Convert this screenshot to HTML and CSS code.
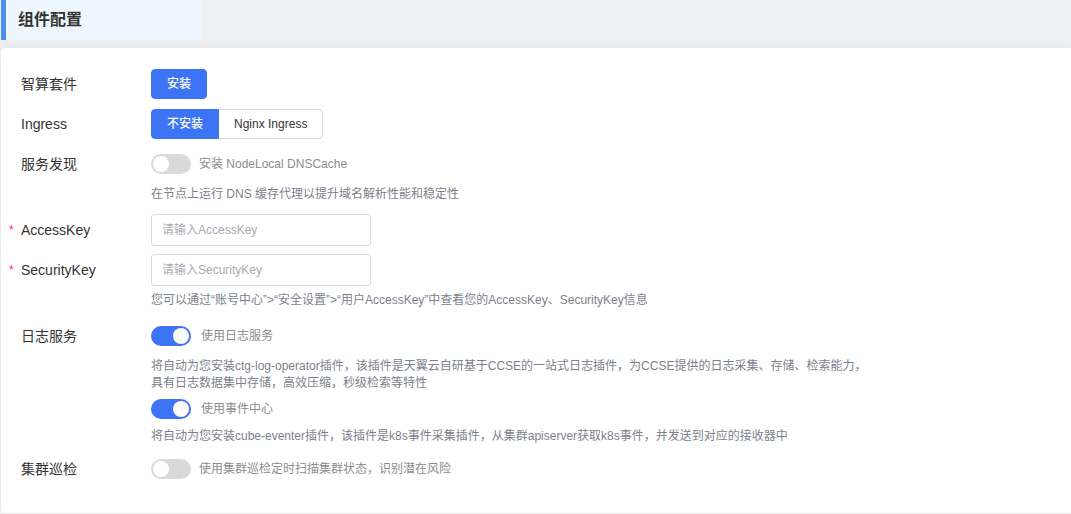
FILE: index.html
```html
<!DOCTYPE html>
<html lang="zh-CN">
<head>
<meta charset="utf-8">
<title>组件配置</title>
<link rel="stylesheet" href="styles.css">
</head>
<body>
<header class="section-bar"><h1 class="section-title">组件配置</h1></header>
<form class="card">
  <div class="row">
    <span class="label" id="suite">智算套件</span>
    <div class="content">
      <div class="line segments" role="group" aria-labelledby="suite">
        <button type="button" class="segment active" aria-pressed="true">安装</button>
      </div>
    </div>
  </div>
  <div class="row">
    <span class="label" id="ingress">Ingress</span>
    <div class="content">
      <div class="line segments" role="group" aria-labelledby="ingress">
        <button type="button" class="segment active" aria-pressed="true">不安装</button>
        <button type="button" class="segment" aria-pressed="false">Nginx Ingress</button>
      </div>
    </div>
  </div>
  <div class="row spaced">
    <span class="label">服务发现</span>
    <div class="content">
      <div class="line">
        <input class="switch" type="checkbox" id="dns">
        <label class="switch-text" for="dns">安装 NodeLocal DNSCache</label>
      </div>
      <p class="hint">在节点上运行 DNS 缓存代理以提升域名解析性能和稳定性</p>
    </div>
  </div>
  <div class="row">
    <label class="label required" for="ak">AccessKey</label>
    <div class="content">
      <div class="line"><input class="text-box" type="text" id="ak" placeholder="请输入AccessKey"></div>
    </div>
  </div>
  <div class="row spaced">
    <label class="label required" for="sk">SecurityKey</label>
    <div class="content">
      <div class="line"><input class="text-box" type="text" id="sk" placeholder="请输入SecurityKey"></div>
      <p class="hint">您可以通过“账号中心”&gt;“安全设置”&gt;“用户AccessKey”中查看您的AccessKey、SecurityKey信息</p>
    </div>
  </div>
  <div class="row services">
    <span class="label">日志服务</span>
    <div class="content">
      <div class="line">
        <input class="switch" type="checkbox" id="log" checked>
        <label class="switch-text wide" for="log">使用日志服务</label>
      </div>
      <p class="hint">将自动为您安装ctg-log-operator插件，该插件是天翼云自研基于CCSE的一站式日志插件，为CCSE提供的日志采集、存储、检索能力，<br>具有日志数据集中存储，高效压缩，秒级检索等特性</p>
      <div class="line compact">
        <input class="switch" type="checkbox" id="event" checked>
        <label class="switch-text wide" for="event">使用事件中心</label>
      </div>
      <p class="hint">将自动为您安装cube-eventer插件，该插件是k8s事件采集插件，从集群apiserver获取k8s事件，并发送到对应的接收器中</p>
    </div>
  </div>
  <div class="row">
    <span class="label">集群巡检</span>
    <div class="content">
      <div class="line">
        <input class="switch" type="checkbox" id="inspect">
        <label class="switch-text" for="inspect">使用集群巡检定时扫描集群状态，识别潜在风险</label>
      </div>
    </div>
  </div>
</form>
</body>
</html>
```

FILE: styles.css
```css
* { box-sizing: border-box; }

body {
  margin: 0;
  padding-left: 1px;
  background: #eff0f4;
  color: #333;
  font: 12px/17px "Liberation Sans", "Noto Sans CJK SC", sans-serif;
}

.section-bar {
  width: 200px;
  height: 40px;
  padding-left: 12px;
  border-left: 5px solid #4a90e8;
  background: #edf6ff;
}

.section-title {
  margin: 0;
  font-size: 16px;
  font-weight: 700;
  line-height: 40px;
}

.card {
  margin-top: 8px;
  padding: 16px 20px 24px;
  border-bottom: 1px solid #ebebeb;
  border-radius: 4px 0 0 4px;
  background: #fff;
  box-shadow: 0 0 12px rgba(0, 0, 0, 0.06);
}

.row { display: flex; }
.row.spaced { margin-bottom: 7px; }
.row.services { margin-bottom: 4px; }

.label {
  position: relative;
  flex: 0 0 130px;
  font-size: 14px;
  line-height: 40px;
}

.required::before {
  content: "*";
  position: absolute;
  left: -12px;
  color: #ff2f45;
  font-size: 12px;
}

.content { flex: 1; min-width: 0; }

.line {
  display: flex;
  align-items: center;
  height: 40px;
}

.line.compact { height: 34px; }

.segment {
  height: 30px;
  padding: 0 15px;
  border: 1px solid #d9d9d9;
  background: #fff;
  color: #333;
  font: inherit;
}

.segment.active {
  border-color: #3d73f5;
  background: #3d73f5;
  color: #fff;
  font-weight: 500;
}

.segment + .segment { border-left: 0; }
.segment:first-child { border-radius: 4px 0 0 4px; }
.segment:last-child { border-radius: 0 4px 4px 0; }
.segment:only-child { border-radius: 4px; }

.switch {
  appearance: none;
  flex: none;
  width: 40px;
  height: 20px;
  margin: 0;
  padding: 2px;
  border-radius: 10px;
  background: #d9d9d9;
}

.switch::before {
  content: "";
  display: block;
  width: 16px;
  height: 16px;
  border-radius: 50%;
  background: #fff;
}

.switch:checked { background: #3d73f5; }
.switch:checked::before { margin-left: auto; }

.switch-text {
  margin-left: 8px;
  color: #8c8c8c;
}

.switch-text.wide { margin-left: 10px; }

.hint {
  margin: 2px 0 0;
  color: #7c7f8c;
}

.text-box {
  width: 220px;
  height: 32px;
  padding: 0 10px;
  border: 1px solid #d9d9d9;
  border-radius: 3px;
  background: #fff;
  color: #333;
  font: inherit;
}

.text-box::placeholder { color: #a8abb2; }
```
